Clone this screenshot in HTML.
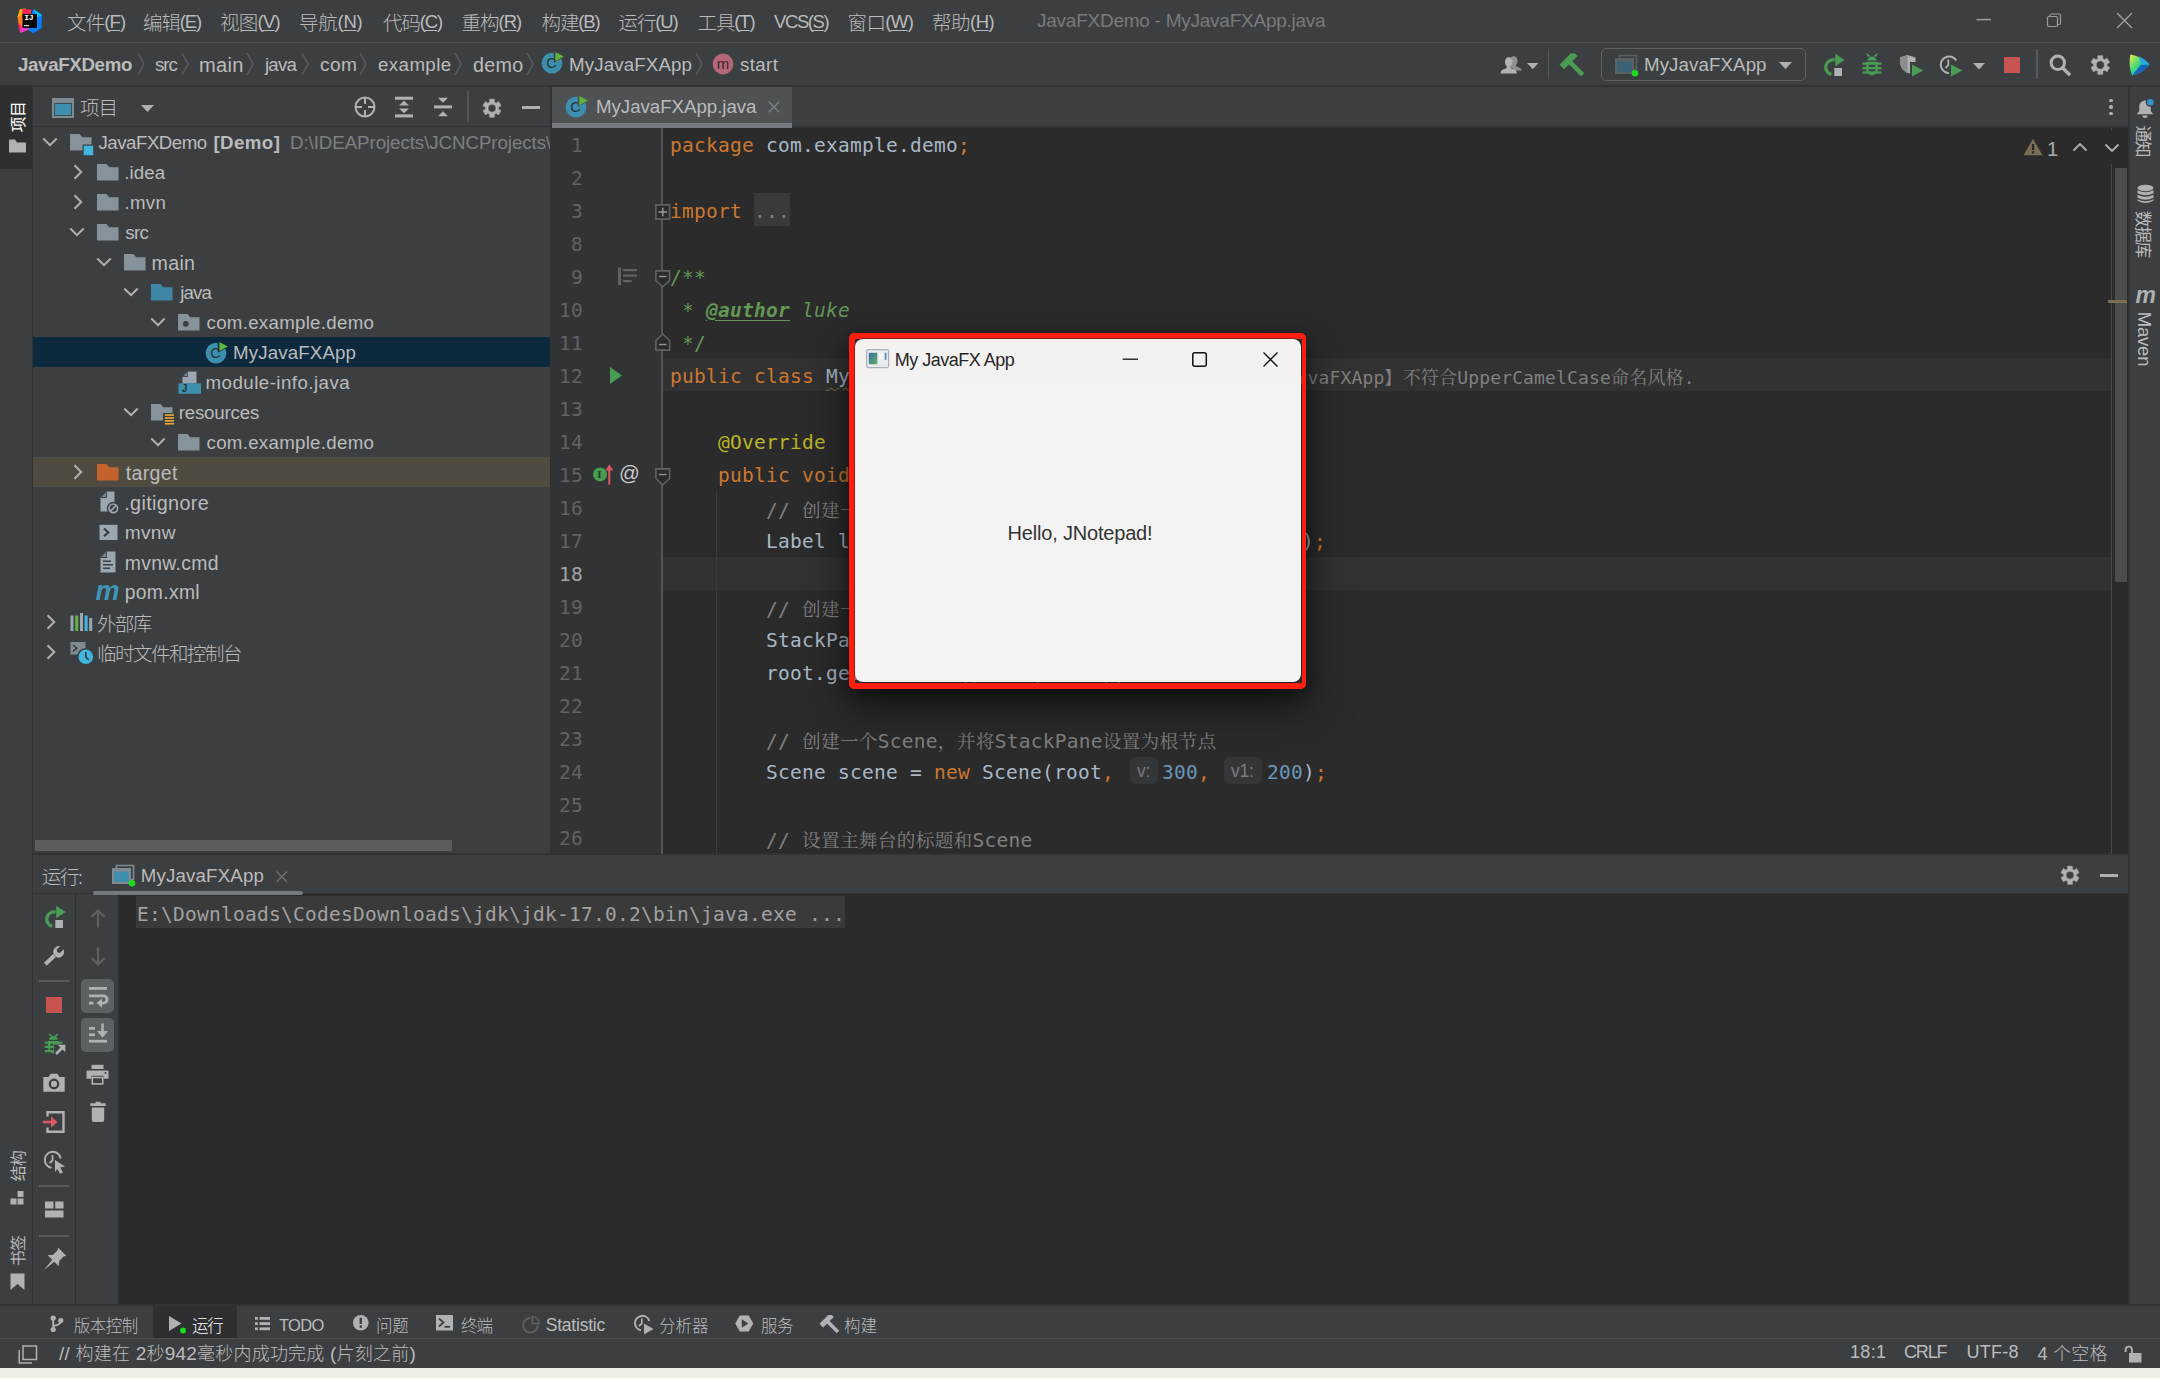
<!DOCTYPE html><html lang="zh-CN"><head><meta charset="utf-8"><title>JavaFXDemo - MyJavaFXApp.java</title><style>
*{box-sizing:border-box;margin:0;padding:0}
html,body{width:2160px;height:1378px;overflow:hidden;background:#3c3f41}
body{position:relative;font-family:"Liberation Sans","Noto Sans CJK SC",sans-serif;font-size:19px;color:#bbbbbb}
.a{position:absolute}
.t{position:absolute;white-space:pre;height:30px;line-height:30px}
.c{font-family:"Noto Sans CJK SC","Liberation Sans",sans-serif;font-size:19.5px;font-weight:300}
.m{font-family:"Liberation Mono","Noto Sans CJK SC",monospace;font-size:20px}
.code{position:absolute;white-space:pre;height:33px;line-height:33px;font-family:"DejaVu Sans Mono","Liberation Mono","Noto Serif CJK SC",monospace;font-size:19.500px;letter-spacing:0.260px;color:#a9b7c6;left:670px}
.ln{position:absolute;white-space:pre;height:33px;line-height:33px;font-family:"DejaVu Sans Mono","Liberation Mono",monospace;font-size:19.500px;letter-spacing:0.260px;color:#606366;text-align:right;width:40px;left:543px}
.z{font-family:"Noto Serif CJK SC",serif;font-size:18.700px}.z2{font-family:"Noto Serif CJK SC",serif;font-size:18px}.dc0{color:#629755}.zs{font-family:"Noto Sans CJK SC",sans-serif!important}
.ml{position:relative;top:-2px}
.k{color:#cc7832}.cm{color:#808080}.dc{color:#629755;font-style:italic}.an{color:#bbb529}.nu{color:#6897bb}
svg{position:absolute;overflow:visible}
u{text-decoration:underline;text-underline-offset:2px}
</style></head><body><div class="a" style="left:0px;top:0px;width:2160px;height:1378px;background:#3c3f41;"></div><div class="a" style="left:0px;top:42px;width:2160px;height:1px;background:#515151;"></div><div class="a" style="left:0px;top:85px;width:2160px;height:2px;background:#323232;"></div><div class="a" style="left:552px;top:87px;width:1576px;height:40px;background:#3c3f41;"></div><div class="a" style="left:552px;top:126px;width:1576px;height:2px;background:#323232;"></div><div class="a" style="left:552px;top:128px;width:1576px;height:726px;background:#2b2b2b;"></div><div class="a" style="left:552px;top:128px;width:110px;height:726px;background:#313335;"></div><div class="a" style="left:550px;top:87px;width:2px;height:768px;background:#323232;"></div><div class="a" style="left:32px;top:87px;width:1px;height:1219px;background:#323232;"></div><div class="a" style="left:33px;top:853px;width:2095px;height:2px;background:#323232;"></div><div class="a" style="left:33px;top:855px;width:2095px;height:38px;background:#3c3f41;"></div><div class="a" style="left:33px;top:893px;width:2095px;height:1px;background:#323232;"></div><div class="a" style="left:119px;top:894px;width:2009px;height:410px;background:#2b2b2b;"></div><div class="a" style="left:75px;top:894px;width:1px;height:410px;background:#323232;"></div><div class="a" style="left:118px;top:894px;width:1px;height:410px;background:#323232;"></div><div class="a" style="left:2128px;top:87px;width:1.5px;height:1219px;background:#313335;"></div><div class="a" style="left:0px;top:1304px;width:2160px;height:2px;background:#323232;"></div><div class="a" style="left:0px;top:1338px;width:2160px;height:1px;background:#4a4d4f;"></div><div class="a" style="left:0px;top:1368px;width:2160px;height:10px;background:#eeeee3;"></div><svg style="left:17px;top:8px" width="26" height="26" viewBox="0 0 26 26">
<polygon points="0.500,9 3,1.500 8.500,0.300 7,11 7.500,18 1.500,14.500" fill="#fc801d"/>
<polygon points="0.500,9 3,1.500 6,0.800 4,8" fill="#fdb60d"/>
<polygon points="5.500,1 14.500,1.800 13,9 5,10" fill="#fe2857"/>
<polygon points="1,15 7,12 9,20 3,25" fill="#fe2857"/>
<polygon points="1,14.500 6,12.500 5,18" fill="#fc801d"/>
<polygon points="14,7 16.500,1 25,7 24.500,20 16,25.500 10,21" fill="#087cfa"/>
<polygon points="16.500,1 25,7 20,10" fill="#07c3f2"/>
<polygon points="3,25 4,18 13,20.500 9,23" fill="#f23ac5"/>
<rect x="5.5" y="6" width="14.5" height="14" fill="#0a0a0a"/>
<rect x="7" y="17.2" width="5" height="1" fill="#fff"/>
</svg><div class="t " style="left:24.3px;top:13.3px;height:10px;line-height:10px;font-family:'Liberation Mono',monospace;font-weight:bold;font-size:8px;color:#fff;letter-spacing:-0.3px">IJ</div><div class="t " style="left:67.00px;top:6.5px;height:30px;line-height:30px;font-size:18.5px;letter-spacing:-0.875px"><span class="c">文件</span><span class="ml">(<u>F</u>)</span></div><div class="t " style="left:143.00px;top:6.5px;height:30px;line-height:30px;font-size:18.5px;letter-spacing:-1.125px"><span class="c">编辑</span><span class="ml">(<u>E</u>)</span></div><div class="t " style="left:220.00px;top:6.5px;height:30px;line-height:30px;font-size:18.5px;letter-spacing:-0.750px"><span class="c">视图</span><span class="ml">(<u>V</u>)</span></div><div class="t " style="left:299.00px;top:6.5px;height:30px;line-height:30px;font-size:18.5px;letter-spacing:-0.250px"><span class="c">导航</span><span class="ml">(<u>N</u>)</span></div><div class="t " style="left:383.00px;top:6.5px;height:30px;line-height:30px;font-size:18.5px;letter-spacing:-1.125px"><span class="c">代码</span><span class="ml">(<u>C</u>)</span></div><div class="t " style="left:461.50px;top:6.5px;height:30px;line-height:30px;font-size:18.5px;letter-spacing:-1.000px"><span class="c">重构</span><span class="ml">(<u>R</u>)</span></div><div class="t " style="left:541.50px;top:6.5px;height:30px;line-height:30px;font-size:18.5px;letter-spacing:-1.125px"><span class="c">构建</span><span class="ml">(<u>B</u>)</span></div><div class="t " style="left:618.50px;top:6.5px;height:30px;line-height:30px;font-size:18.5px;letter-spacing:-1.125px"><span class="c">运行</span><span class="ml">(<u>U</u>)</span></div><div class="t " style="left:697.50px;top:6.5px;height:30px;line-height:30px;font-size:18.5px;letter-spacing:-1.125px"><span class="c">工具</span><span class="ml">(<u>T</u>)</span></div><div class="t " style="left:774.00px;top:7.199999999999999px;height:30px;line-height:30px;font-size:18.5px;letter-spacing:-1.400px">VCS(<u>S</u>)</div><div class="t " style="left:847.50px;top:6.5px;height:30px;line-height:30px;font-size:18.5px;letter-spacing:-0.625px"><span class="c">窗口</span><span class="ml">(<u>W</u>)</span></div><div class="t " style="left:932.00px;top:6.5px;height:30px;line-height:30px;font-size:18.5px;letter-spacing:-0.500px"><span class="c">帮助</span><span class="ml">(<u>H</u>)</span></div><div class="t " style="left:1037.00px;top:5.5px;height:30px;line-height:30px;color:#787a7c;font-size:19px;letter-spacing:-0.250px">JavaFXDemo - MyJavaFXApp.java</div><svg style="left:1970px;top:8px" width="170" height="26" viewBox="0 0 170 26" fill="none" stroke="#9a9c9e" stroke-width="1.2"><path d="M6.500 11.600H21" stroke-width="1.500"/><rect x="77.5" y="8.5" width="10" height="10" rx="1.5"/><path d="M80 8.5V7.5q0-1.5 1.5-1.5H89q1.5 0 1.5 1.5V15q0 1.5-1.5 1.5H87.5"/><path d="M147 5L162 20M162 5L147 20" stroke="#a0a2a4" stroke-width="1.3"/></svg><div class="t " style="left:18.00px;top:50.0px;height:30px;line-height:30px;font-size:18.700px;font-weight:bold;font-size:18.700px;letter-spacing:-0.333px">JavaFXDemo</div><div class="t " style="left:155.00px;top:50.0px;height:30px;line-height:30px;font-size:18.700px;;letter-spacing:-1.000px">src</div><div class="t " style="left:198.92px;top:50.0px;height:30px;line-height:30px;font-size:20.11px;;letter-spacing:0.350px">main</div><div class="t " style="left:265.00px;top:50.0px;height:30px;line-height:30px;font-size:18.700px;;letter-spacing:-0.833px">java</div><div class="t " style="left:320.00px;top:50.0px;height:30px;line-height:30px;font-size:19.13px;;letter-spacing:0.350px">com</div><div class="t " style="left:378.00px;top:50.0px;height:30px;line-height:30px;font-size:18.700px;;letter-spacing:0.417px">example</div><div class="t " style="left:473.00px;top:50.0px;height:30px;line-height:30px;font-size:19.70px;;letter-spacing:0.350px">demo</div><div class="t " style="left:569.00px;top:50.0px;height:30px;line-height:30px;font-size:18.700px;;letter-spacing:0.150px">MyJavaFXApp</div><div class="t " style="left:740.00px;top:50.0px;height:30px;line-height:30px;font-size:18.700px;;letter-spacing:0.375px">start</div><svg style="left:137px;top:52px" width="9" height="24" viewBox="0 0 9 24" fill="none" stroke="#5d6062" stroke-width="1.2"><path d="M1 1L7 12L1 23"/></svg><svg style="left:181px;top:52px" width="9" height="24" viewBox="0 0 9 24" fill="none" stroke="#5d6062" stroke-width="1.2"><path d="M1 1L7 12L1 23"/></svg><svg style="left:246px;top:52px" width="9" height="24" viewBox="0 0 9 24" fill="none" stroke="#5d6062" stroke-width="1.2"><path d="M1 1L7 12L1 23"/></svg><svg style="left:301px;top:52px" width="9" height="24" viewBox="0 0 9 24" fill="none" stroke="#5d6062" stroke-width="1.2"><path d="M1 1L7 12L1 23"/></svg><svg style="left:359px;top:52px" width="9" height="24" viewBox="0 0 9 24" fill="none" stroke="#5d6062" stroke-width="1.2"><path d="M1 1L7 12L1 23"/></svg><svg style="left:454px;top:52px" width="9" height="24" viewBox="0 0 9 24" fill="none" stroke="#5d6062" stroke-width="1.2"><path d="M1 1L7 12L1 23"/></svg><svg style="left:526px;top:52px" width="9" height="24" viewBox="0 0 9 24" fill="none" stroke="#5d6062" stroke-width="1.2"><path d="M1 1L7 12L1 23"/></svg><svg style="left:695px;top:52px" width="9" height="24" viewBox="0 0 9 24" fill="none" stroke="#5d6062" stroke-width="1.2"><path d="M1 1L7 12L1 23"/></svg><svg style="left:541px;top:51px" width="24" height="24" viewBox="0 0 24 24"><circle cx="11" cy="12.2" r="10.4" fill="#3d8fad"/><text x="10.6" y="17" text-anchor="middle" font-family="Liberation Sans,sans-serif" font-size="14.5" fill="#26343c">C</text><path d="M12.8 -0.6L24.4 5.6L12.8 11.8Z" fill="#3c3f41"/><path d="M14.4 0.9L22.8 5.6L14.4 10.3Z" fill="#5fb63c"/></svg><svg style="left:712px;top:52.5px" width="22" height="22" viewBox="0 0 22 22"><circle cx="11" cy="11" r="10.4" fill="#b5677a"/><text x="11" y="15.5" text-anchor="middle" font-family="Liberation Sans,sans-serif" font-size="15" fill="#3a2329">m</text></svg><svg style="left:1500px;top:54px" width="24" height="22" viewBox="0 0 24 22" ><path d="M13.5 2.2c2.6 0 4 2 4 4.6 0 1.8-.7 3.3-1.8 4.300 .3 1.300 1.500 1.800 3.500 2.600 1.600.6 2.300 1.300 2.500 2.900H13.500c-.3-1.900-1.500-2.900-3.200-3.500 1.100-1.300 1.400-2.400 1.400-4.200 0-2-.5-3.500-1.600-4.600.8-1.300 1.900-2.100 3.400-2.100Z" fill="#8f9193"/><path d="M8.200 3.200c2.800 0 4.300 2.100 4.300 4.900 0 2-.8 3.600-2 4.600.2 1.500 1.500 2 3.600 2.800 1.800.7 2.700 1.500 2.900 4.100H.5c.2-2.600 1.100-3.400 2.900-4.100 2.100-.8 3.400-1.300 3.600-2.800-1.200-1-2-2.600-2-4.600 0-2.800 1.500-4.900 3.200-4.900Z" fill="#afb1b3"/></svg><svg style="left:1527.25px;top:62.85px" width="11.5" height="6.3" viewBox="0 0 11.5 6.3" ><path d="M0 0H11.5L5.75 6.3Z" fill="#afb1b3"/></svg><div class="a" style="left:1547.5px;top:49px;width:1.5px;height:30px;background:#555759;"></div><svg style="left:0;top:0" width="1" height="1"><g transform="translate(1568.3 60.5) rotate(-45) scale(1.0)" fill="#499c54"><path d="M-9.200 -3.300H6.500L9.600 -0.300V3.300H-9.200Z"/><rect x="-2.200" y="2" width="4.500" height="18.300"/></g></svg><div class="a" style="left:1601px;top:48px;width:205px;height:33px;border:1.5px solid #5e6062;border-radius:5px"></div><svg style="left:1615px;top:54px" width="24" height="24" viewBox="0 0 24 24" ><path d="M4.500 4.500V1.500H21.500V15.500H19" fill="none" stroke="#5a6165" stroke-width="1.600"/><rect x="1.100" y="5.100" width="16.800" height="13.800" fill="#3b6174" stroke="#5a6165" stroke-width="2.200"/><rect x="0" y="4" width="19" height="3.600" fill="#5a6165"/><circle cx="20" cy="19.200" r="3.300" fill="#1ddc1d"/></svg><div class="t " style="left:1644.00px;top:49.5px;height:30px;line-height:30px;font-size:18.700px;letter-spacing:0.100px">MyJavaFXApp</div><svg style="left:1778.5px;top:61.5px" width="13" height="7" viewBox="0 0 13 7" ><path d="M0 0H13L6.5 7Z" fill="#afb1b3"/></svg><svg style="left:1822px;top:53px" width="24" height="24" viewBox="0 0 24 24" ><path d="M12.600 7.050A7.300 7.300 0 1 0 9.400 21.300" fill="none" stroke="#499c54" stroke-width="3.200"/><path d="M13.200 0.800L22.600 7L13.200 13.200Z" fill="#499c54"/><rect x="12.300" y="15" width="7.700" height="8" fill="#afb1b3"/></svg><svg style="left:1862px;top:54px" width="20" height="22" viewBox="0 0 20 22" ><g fill="#499c54"><path d="M4.200 0.500l2.700 2.700 1.200-1.200L5.400 -0.700ZM15.800 0.500l-2.700 2.700-1.200-1.200L14.600 -0.700Z"/><path d="M5.500 6.500a4.500 4 0 0 1 9 0Z"/><path d="M4.200 7.800H15.800V15.500a5.800 5.800 0 0 1-11.600 0Z"/><rect x="0.500" y="8.500" width="19" height="2.300"/><rect x="0.500" y="13" width="19" height="2.300"/><rect x="0.500" y="17.300" width="19" height="2.300"/></g><rect x="6.800" y="10.800" width="6.400" height="2.200" fill="#3c3f41"/><rect x="6.800" y="15.300" width="6.400" height="2" fill="#3c3f41"/></svg><svg style="left:1899px;top:54px" width="26" height="24" viewBox="0 0 26 24" ><path d="M1 3.500L8.500 1L16.500 3.500V8H11V19.500C5 17.500 1 13 1 8Z" fill="#afb1b3"/><path d="M8.600 1L1 3.500V8C1 13 4.500 17.500 8.600 19.600Z" fill="#8b8d8f"/><path d="M13 10.500L24.300 16.500L13 22.500Z" fill="#499c54"/></svg><svg style="left:1938px;top:54px" width="26" height="24" viewBox="0 0 26 24" ><path d="M18.300 6.500A8.300 8.300 0 1 0 11 19" fill="none" stroke="#afb1b3" stroke-width="2"/><path d="M10.300 5.500V11.200L7.500 14" fill="none" stroke="#afb1b3" stroke-width="1.800"/><path d="M13 10.500L24.300 16.500L13 22.500Z" fill="#499c54"/></svg><svg style="left:1973.0px;top:62.55px" width="12" height="6.5" viewBox="0 0 12 6.5" ><path d="M0 0H12L6.0 6.5Z" fill="#afb1b3"/></svg><div class="a" style="left:2004.3px;top:57.3px;width:15.5px;height:15.4px;background:#c75450;"></div><div class="a" style="left:2036px;top:49px;width:2px;height:30px;background:#555759;"></div><svg style="left:2046px;top:52px" width="28" height="28" viewBox="0 0 28 28" ><circle cx="11.800" cy="10.800" r="6.700" fill="none" stroke="#afb1b3" stroke-width="3"/><path d="M16.500 15.800L24 23.200" stroke="#afb1b3" stroke-width="3.400"/></svg><svg style="left:2088px;top:52px" width="26" height="26" viewBox="0 0 26 26" ><path d="M14.68 6.71L14.81 3.73L9.79 3.73L9.92 6.71L8.04 7.80L5.53 6.19L3.02 10.54L5.67 11.91L5.67 14.09L3.02 15.46L5.53 19.81L8.04 18.20L9.92 19.29L9.79 22.27L14.81 22.27L14.68 19.29L16.56 18.20L19.07 19.81L21.58 15.46L18.93 14.09L18.93 11.91L21.58 10.54L19.07 6.19L16.56 7.80ZM16.43 13.00A4.13 4.13 0 1 0 8.17 13.00A4.13 4.13 0 1 0 16.43 13.00Z" fill="#afb1b3" fill-rule="evenodd" stroke="#afb1b3" stroke-width="0.6" stroke-linejoin="round"/></svg><svg style="left:2127px;top:53px" width="24" height="24" viewBox="0 0 24 24" ><defs><linearGradient id="lg1" x1="0" y1="0" x2="1" y2="1"><stop offset="0" stop-color="#f4f14a"/><stop offset="0.450" stop-color="#3fd67a"/><stop offset="1" stop-color="#12b5c9"/></linearGradient></defs><path d="M3.500 1.500Q1 11 5 22.500Q16 20 22.500 11.500Q14 3 3.500 1.500Z" fill="url(#lg1)"/><path d="M14 11.500L22.500 11.500Q16 20 5 22.500Z" fill="#1565c0"/><path d="M14 11.500L22.500 11.500Q18 6 12 3.500Z" fill="#29a9e0"/></svg><div class="a" style="left:0px;top:87px;width:32px;height:82px;background:#2d2f30;"></div><div class="a c" style="left:18px;top:116.5px;width:0;height:0;"><div style="position:absolute;white-space:pre;transform:translate(-50%,-50%) rotate(-90deg);line-height:20px;font-size:15.800px;color:#ffffff;letter-spacing:-0.500px;font-weight:400">项目</div></div><svg style="left:8px;top:138px" width="20" height="16" viewBox="0 0 20 16" ><path d="M1 2.500Q1 1.500 2 1.500H7L9 4.500H17Q18 4.500 18 5.500V14.500H1Z" fill="#afb1b3"/></svg><div class="a c" style="left:17.8px;top:1166px;width:0;height:0;"><div style="position:absolute;white-space:pre;transform:translate(-50%,-50%) rotate(-90deg);line-height:20px;font-size:15.800px;letter-spacing:-0.500px;font-weight:400">结构</div></div><svg style="left:10px;top:1190px" width="16" height="16" viewBox="0 0 16 16" ><rect x="7.500" y="1" width="6" height="6" fill="#afb1b3"/><rect x="0.500" y="8.500" width="6" height="6" fill="#afb1b3"/><rect x="7.500" y="8.500" width="6" height="6" fill="#afb1b3"/></svg><div class="a c" style="left:17.8px;top:1250.5px;width:0;height:0;"><div style="position:absolute;white-space:pre;transform:translate(-50%,-50%) rotate(-90deg);line-height:20px;font-size:15.800px;letter-spacing:-0.500px;font-weight:400">书签</div></div><svg style="left:10px;top:1273px" width="16" height="18" viewBox="0 0 16 18" ><path d="M0.500 0.500H14.500V17L7.500 11L0.500 17Z" fill="#afb1b3"/></svg><svg style="left:52px;top:98px" width="22" height="20" viewBox="0 0 22 20" ><rect x="0" y="0" width="22" height="20" fill="#7f8b91"/><rect x="2.500" y="5.500" width="17" height="12" fill="#3d8fad"/><rect x="2.500" y="5.500" width="17" height="12" fill="none" stroke="#3c4a52" stroke-width="1"/></svg><div class="t c" style="left:80.00px;top:92.0px;height:30px;line-height:30px;font-size:19.500px;letter-spacing:-1.000px">项目</div><svg style="left:140.5px;top:105.0px" width="13" height="7" viewBox="0 0 13 7" ><path d="M0 0H13L6.5 7Z" fill="#afb1b3"/></svg><svg style="left:353px;top:95px" width="24" height="24" viewBox="0 0 24 24" ><circle cx="12" cy="12" r="9.500" fill="none" stroke="#afb1b3" stroke-width="2"/><path d="M12 2.500V9M12 15V21.500M2.500 12H9M15 12H21.500" stroke="#afb1b3" stroke-width="2"/></svg><svg style="left:394px;top:96px" width="20" height="22" viewBox="0 0 20 22" ><rect x="1" y="0.700" width="18" height="3" fill="#afb1b3"/><rect x="1" y="18.400" width="18" height="3" fill="#afb1b3"/><path d="M5 9.600L10 4.800L15 9.600ZM5 12.500L10 17.300L15 12.500Z" fill="#afb1b3"/></svg><svg style="left:433px;top:96px" width="20" height="22" viewBox="0 0 20 22" ><rect x="1" y="9.400" width="18" height="3" fill="#afb1b3"/><path d="M5 1.800L10 6.800L15 1.800ZM5 20.200L10 15.200L15 20.200Z" fill="#afb1b3"/></svg><div class="a" style="left:467px;top:91px;width:2px;height:31px;background:#515355;"></div><svg style="left:480px;top:96px" width="24" height="24" viewBox="0 0 24 24" ><path d="M14.30 6.11L14.44 3.22L9.56 3.22L9.70 6.11L7.88 7.16L5.44 5.60L3.01 9.82L5.58 11.15L5.58 13.25L3.01 14.58L5.44 18.80L7.88 17.24L9.70 18.29L9.56 21.18L14.44 21.18L14.30 18.29L16.12 17.24L18.56 18.80L20.99 14.58L18.42 13.25L18.42 11.15L20.99 9.82L18.56 5.60L16.12 7.16ZM16.00 12.20A4.00 4.00 0 1 0 8.00 12.20A4.00 4.00 0 1 0 16.00 12.20Z" fill="#afb1b3" fill-rule="evenodd" stroke="#afb1b3" stroke-width="0.6" stroke-linejoin="round"/></svg><div class="a" style="left:522px;top:105.6px;width:18px;height:3px;background:#afb1b3;"></div><div class="a" style="left:33px;top:126px;width:517px;height:1px;background:#323232;"></div><div class="a" style="left:33px;top:337px;width:517px;height:30px;background:#0d293e;"></div><div class="a" style="left:33px;top:457px;width:517px;height:30px;background:#4f4b41;"></div><svg style="left:42px;top:136.5px" width="16" height="10" viewBox="0 0 16 10" ><path d="M1.300 1.500L8 8.200L14.700 1.500" fill="none" stroke="#afb1b3" stroke-width="2"/></svg><svg style="left:70px;top:133.8px" width="24" height="22" viewBox="0 0 24 22" ><path d="M0 0H9.600L12.200 3.300H21.500V16.500H0Z" fill="#87939a"/><rect x="12.500" y="10.500" width="12" height="12" fill="#3c3f41"/><rect x="13.700" y="11.700" width="9.500" height="9.500" fill="#40b6e0"/></svg><div class="t " style="left:98.50px;top:128.0px;height:30px;line-height:30px;font-size:18.700px;letter-spacing:-0.500px">JavaFXDemo</div><div class="t " style="left:213.50px;top:128.0px;height:30px;line-height:30px;font-size:18.700px;font-weight:bold;letter-spacing:0.400px">[Demo]</div><div class="t " style="left:290.00px;top:128.0px;height:30px;line-height:30px;font-size:18.700px;color:#7d8082;letter-spacing:-0.056px">D:\IDEAProjects\JCNCProjects</div><div class="t " style="left:545.8px;top:128.0px;height:30px;line-height:30px;font-size:18.700px;color:#7d8082;width:4.200px;overflow:hidden">\</div><svg style="left:72.5px;top:164px" width="10" height="16" viewBox="0 0 10 16" ><path d="M1.500 1.300L8.200 8L1.500 14.700" fill="none" stroke="#afb1b3" stroke-width="2"/></svg><svg style="left:97px;top:163.8px" width="22" height="17" viewBox="0 0 22 17" ><path d="M0 0H9.600L12.200 3.300H21.500V16.500H0Z" fill="#87939a"/></svg><div class="t " style="left:124.30px;top:158.0px;height:30px;line-height:30px;font-size:18.700px;letter-spacing:0.050px">.idea</div><svg style="left:72.5px;top:194px" width="10" height="16" viewBox="0 0 10 16" ><path d="M1.500 1.300L8.200 8L1.500 14.700" fill="none" stroke="#afb1b3" stroke-width="2"/></svg><svg style="left:97px;top:193.8px" width="22" height="17" viewBox="0 0 22 17" ><path d="M0 0H9.600L12.200 3.300H21.500V16.500H0Z" fill="#87939a"/></svg><div class="t " style="left:124.30px;top:188.0px;height:30px;line-height:30px;font-size:18.700px;letter-spacing:0.400px">.mvn</div><svg style="left:69px;top:226.5px" width="16" height="10" viewBox="0 0 16 10" ><path d="M1.300 1.500L8 8.200L14.700 1.500" fill="none" stroke="#afb1b3" stroke-width="2"/></svg><svg style="left:97px;top:223.8px" width="22" height="17" viewBox="0 0 22 17" ><path d="M0 0H9.600L12.200 3.300H21.500V16.500H0Z" fill="#87939a"/></svg><div class="t " style="left:125.30px;top:218.0px;height:30px;line-height:30px;font-size:18.700px;letter-spacing:-0.650px">src</div><svg style="left:96px;top:256.5px" width="16" height="10" viewBox="0 0 16 10" ><path d="M1.300 1.500L8 8.200L14.700 1.500" fill="none" stroke="#afb1b3" stroke-width="2"/></svg><svg style="left:124px;top:253.8px" width="22" height="17" viewBox="0 0 22 17" ><path d="M0 0H9.600L12.200 3.300H21.500V16.500H0Z" fill="#87939a"/></svg><div class="t " style="left:151.45px;top:248.0px;height:30px;line-height:30px;font-size:19.64px;letter-spacing:0.350px">main</div><svg style="left:123px;top:286.5px" width="16" height="10" viewBox="0 0 16 10" ><path d="M1.300 1.500L8 8.200L14.700 1.500" fill="none" stroke="#afb1b3" stroke-width="2"/></svg><svg style="left:151px;top:283.8px" width="22" height="17" viewBox="0 0 22 17" ><path d="M0 0H9.600L12.200 3.300H21.500V16.500H0Z" fill="#3f88a5"/></svg><div class="t " style="left:180.20px;top:278.0px;height:30px;line-height:30px;font-size:18.700px;letter-spacing:-0.900px">java</div><svg style="left:150px;top:316.5px" width="16" height="10" viewBox="0 0 16 10" ><path d="M1.300 1.500L8 8.200L14.700 1.500" fill="none" stroke="#afb1b3" stroke-width="2"/></svg><svg style="left:178px;top:313.8px" width="22" height="17" viewBox="0 0 22 17" ><path d="M0 0H9.600L12.200 3.300H21.500V16.500H0Z" fill="#87939a"/><circle cx="7.800" cy="9.800" r="2.900" fill="#3c3f41"/></svg><div class="t " style="left:206.50px;top:308.0px;height:30px;line-height:30px;font-size:18.700px;letter-spacing:0.287px">com.example.demo</div><svg style="left:204.5px;top:340.5px" width="24" height="24" viewBox="0 0 24 24"><circle cx="11" cy="12.2" r="10.4" fill="#3d8fad"/><text x="10.6" y="17" text-anchor="middle" font-family="Liberation Sans,sans-serif" font-size="14.5" fill="#26343c">C</text><path d="M12.8 -0.6L24.4 5.6L12.8 11.8Z" fill="#0d293e"/><path d="M14.4 0.9L22.8 5.6L14.4 10.3Z" fill="#5fb63c"/></svg><div class="t " style="left:233.00px;top:338.0px;height:30px;line-height:30px;font-size:18.700px;letter-spacing:0.150px">MyJavaFXApp</div><svg style="left:178px;top:371px" width="24" height="24" viewBox="0 0 24 24" ><path d="M4.500 5.700L9.700 0.500H18.500V12.500H4.500Z" fill="#9aa7b0"/><path d="M4.200 6L9.900 0.300V6Z" fill="#3c3f41"/><path d="M5.600 5.200L9.200 1.600V5.200Z" fill="#9aa7b0" opacity="0.700"/><rect x="0.500" y="12.300" width="22.500" height="10.500" fill="#3d8fad"/><text x="6.500" y="21.300" text-anchor="middle" font-family="Liberation Sans,sans-serif" font-size="10" font-weight="bold" fill="#22333c">J</text></svg><div class="t " style="left:205.60px;top:368.0px;height:30px;line-height:30px;font-size:18.700px;letter-spacing:0.460px">module-info.java</div><svg style="left:123px;top:406.5px" width="16" height="10" viewBox="0 0 16 10" ><path d="M1.300 1.500L8 8.200L14.700 1.500" fill="none" stroke="#afb1b3" stroke-width="2"/></svg><svg style="left:151px;top:403.8px" width="24" height="22" viewBox="0 0 24 22" ><path d="M0 0H9.600L12.200 3.300H21.500V16.500H0Z" fill="#87939a"/><rect x="12" y="9" width="12" height="13" fill="#3c3f41"/><rect x="13.800" y="10.2" width="9.200" height="1.700" fill="#e2a53a"/><rect x="13.800" y="13.1" width="9.200" height="1.700" fill="#e2a53a"/><rect x="13.800" y="16.0" width="9.200" height="1.700" fill="#e2a53a"/><rect x="13.800" y="18.9" width="9.200" height="1.700" fill="#e2a53a"/></svg><div class="t " style="left:178.70px;top:398.0px;height:30px;line-height:30px;font-size:18.700px;letter-spacing:-0.175px">resources</div><svg style="left:150px;top:436.5px" width="16" height="10" viewBox="0 0 16 10" ><path d="M1.300 1.500L8 8.200L14.700 1.500" fill="none" stroke="#afb1b3" stroke-width="2"/></svg><svg style="left:178px;top:433.8px" width="22" height="17" viewBox="0 0 22 17" ><path d="M0 0H9.600L12.200 3.300H21.500V16.500H0Z" fill="#87939a"/></svg><div class="t " style="left:206.50px;top:428.0px;height:30px;line-height:30px;font-size:18.700px;letter-spacing:0.287px">com.example.demo</div><svg style="left:72.5px;top:464px" width="10" height="16" viewBox="0 0 10 16" ><path d="M1.500 1.300L8.200 8L1.500 14.700" fill="none" stroke="#afb1b3" stroke-width="2"/></svg><svg style="left:97px;top:463.8px" width="22" height="17" viewBox="0 0 22 17" ><path d="M0 0H9.600L12.200 3.300H21.500V16.500H0Z" fill="#c4622d"/></svg><div class="t " style="left:125.70px;top:458.0px;height:30px;line-height:30px;font-size:19.54px;letter-spacing:0.350px">target</div><svg style="left:97px;top:491px" width="24" height="24" viewBox="0 0 24 24" ><path d="M3.500 6.700L9.700 0.500H17.500V20.500H3.500Z" fill="#9aa7b0"/><path d="M3.200 7L9.900 0.300V7Z" fill="#3c3f41"/><path d="M4.600 6L9 1.600V6Z" fill="#9aa7b0" opacity="0.700"/><circle cx="16.300" cy="17.300" r="6.500" fill="#3c3f41"/><circle cx="16.300" cy="17.300" r="4.300" fill="none" stroke="#9aa7b0" stroke-width="1.700"/><path d="M13.200 20.400L19.400 14.200" stroke="#9aa7b0" stroke-width="1.700"/></svg><div class="t " style="left:124.24px;top:488.0px;height:30px;line-height:30px;font-size:19.75px;letter-spacing:0.350px">.gitignore</div><svg style="left:97px;top:521px" width="24" height="24" viewBox="0 0 24 24" ><rect x="2.500" y="3.800" width="18" height="15.200" fill="#9aa7b0"/><path d="M7 7.500L11.300 11.400L7 15.300" fill="none" stroke="#3c3f41" stroke-width="2.200"/></svg><div class="t " style="left:124.68px;top:518.0px;height:30px;line-height:30px;font-size:19.11px;letter-spacing:0.350px">mvnw</div><svg style="left:97px;top:551px" width="24" height="24" viewBox="0 0 24 24" ><path d="M3.500 6.700L9.700 0.500H18.500V21.500H3.500Z" fill="#9aa7b0"/><path d="M3.200 7L9.900 0.300V7Z" fill="#3c3f41"/><path d="M4.600 6L9 1.600V6Z" fill="#9aa7b0" opacity="0.700"/><path d="M6 10.300H14M6 13.800H16M6 17.300H13" stroke="#3c3f41" stroke-width="1.600"/></svg><div class="t " style="left:124.66px;top:548.0px;height:30px;line-height:30px;font-size:19.38px;letter-spacing:0.350px">mvnw.cmd</div><div class="t" style="left:95.5px;top:575.5px;font-weight:bold;font-style:italic;font-size:27px;color:#3f95b5;letter-spacing:-1px;font-family:'Liberation Sans',sans-serif">m</div><div class="t " style="left:124.67px;top:578.0px;height:30px;line-height:30px;font-size:19.30px;letter-spacing:0.350px">pom.xml</div><svg style="left:45.5px;top:614px" width="10" height="16" viewBox="0 0 10 16" ><path d="M1.500 1.300L8.200 8L1.500 14.700" fill="none" stroke="#afb1b3" stroke-width="2"/></svg><svg style="left:70px;top:611px" width="24" height="24" viewBox="0 0 24 24" ><rect x="0.500" y="4.500" width="3" height="15.500" fill="#9aa7b0"/><rect x="5.200" y="4.500" width="3" height="15.500" fill="#62b543"/><rect x="10" y="2" width="3" height="18" fill="#9aa7b0"/><rect x="14.600" y="4.500" width="3" height="15.500" fill="#40b6e0"/><rect x="19.200" y="7" width="3" height="13" fill="#9aa7b0"/></svg><div class="t c" style="left:97.00px;top:607.5px;height:30px;line-height:30px;font-size:19.500px;letter-spacing:-1.650px">外部库</div><svg style="left:45.5px;top:644px" width="10" height="16" viewBox="0 0 10 16" ><path d="M1.500 1.300L8.200 8L1.500 14.700" fill="none" stroke="#afb1b3" stroke-width="2"/></svg><svg style="left:70px;top:641px" width="24" height="24" viewBox="0 0 24 24" ><rect x="0.500" y="1" width="15" height="12.500" fill="#7f8b91"/><path d="M3 4L6.800 7.200L3 10.400" fill="none" stroke="#3c3f41" stroke-width="1.600"/><circle cx="15.800" cy="15.800" r="8.800" fill="#3c3f41"/><circle cx="15.800" cy="15.800" r="7.300" fill="#40b6e0"/><path d="M15.800 11V16L18.800 19" fill="none" stroke="#3c3f41" stroke-width="1.700"/></svg><div class="t c" style="left:97.00px;top:637.5px;height:30px;line-height:30px;font-size:19.500px;letter-spacing:-1.486px">临时文件和控制台</div><div class="a" style="left:35px;top:840px;width:417px;height:11px;background:#5a5d5f;"></div><div class="a" style="left:552px;top:87px;width:240px;height:41px;background:#4e5254;"></div><div class="a" style="left:552px;top:123px;width:240px;height:5px;background:#747a80;"></div><svg style="left:565px;top:94.5px" width="24" height="24" viewBox="0 0 24 24"><circle cx="11" cy="12.2" r="10.4" fill="#3d8fad"/><text x="10.6" y="17" text-anchor="middle" font-family="Liberation Sans,sans-serif" font-size="14.5" fill="#26343c">C</text><path d="M12.8 -0.6L24.4 5.6L12.8 11.8Z" fill="#4e5254"/><path d="M14.4 0.9L22.8 5.6L14.4 10.3Z" fill="#5fb63c"/></svg><div class="t " style="left:596.00px;top:92.0px;height:30px;line-height:30px;font-size:18.700px;letter-spacing:-0.033px">MyJavaFXApp.java</div><svg style="left:768px;top:101px" width="12" height="12" viewBox="0 0 12 12" ><path d="M0.800 0.800L11.200 11.200M11.200 0.800L0.800 11.200" stroke="#7d8284" stroke-width="1.300"/></svg><div class="a" style="left:2109px;top:98.8px;width:3.600px;height:3.600px;border-radius:50%;background:#afb1b3"></div><div class="a" style="left:2109px;top:105.3px;width:3.600px;height:3.600px;border-radius:50%;background:#afb1b3"></div><div class="a" style="left:2109px;top:111.8px;width:3.600px;height:3.600px;border-radius:50%;background:#afb1b3"></div><div class="a" style="left:662px;top:358px;width:1449px;height:33px;background:#323232;"></div><div class="a" style="left:662px;top:556.5px;width:1449px;height:33px;background:#323232;"></div><div class="a" style="left:661.3px;top:128px;width:1.6px;height:726px;background:#555555;"></div><div class="a" style="left:716px;top:490px;width:1px;height:364px;background:#3b3b3b;"></div><div class="a" style="left:2110.5px;top:128px;width:1px;height:3px;background:#4a4a4a;"></div><div class="a" style="left:2110.5px;top:164px;width:1px;height:690px;background:#4a4a4a;"></div><div class="a" style="left:2115px;top:168px;width:12px;height:414px;background:#4c4c4c;"></div><div class="a" style="left:2108px;top:300px;width:19px;height:3px;background:#7a6f52;"></div><div class="ln" style="top:128.5px;color:#606366">1</div><div class="ln" style="top:161.5px;color:#606366">2</div><div class="ln" style="top:194.5px;color:#606366">3</div><div class="ln" style="top:227.5px;color:#606366">8</div><div class="ln" style="top:260.5px;color:#606366">9</div><div class="ln" style="top:293.5px;color:#606366">10</div><div class="ln" style="top:326.5px;color:#606366">11</div><div class="ln" style="top:359.5px;color:#606366">12</div><div class="ln" style="top:392.5px;color:#606366">13</div><div class="ln" style="top:425.5px;color:#606366">14</div><div class="ln" style="top:458.5px;color:#606366">15</div><div class="ln" style="top:491.5px;color:#606366">16</div><div class="ln" style="top:524.5px;color:#606366">17</div><div class="ln" style="top:557.5px;color:#a4a3a3">18</div><div class="ln" style="top:590.5px;color:#606366">19</div><div class="ln" style="top:623.5px;color:#606366">20</div><div class="ln" style="top:656.5px;color:#606366">21</div><div class="ln" style="top:689.5px;color:#606366">22</div><div class="ln" style="top:722.5px;color:#606366">23</div><div class="ln" style="top:755.5px;color:#606366">24</div><div class="ln" style="top:788.5px;color:#606366">25</div><div class="ln" style="top:821.5px;color:#606366">26</div><div class="code" style="top:128.5px;left:670px"><span class="k">package </span>com.example.demo<span class="k">;</span></div><div class="a" style="left:754px;top:193px;width:36px;height:33px;background:#3a3a3a;"></div><div class="code" style="top:194.5px;left:670px"><span class="k">import </span><span class="cm">...</span></div><div class="code" style="top:260.5px;left:670px"><span class="dc0">/**</span></div><div class="code" style="top:293.5px;left:670px"><span class="dc0"> * </span><span class="dc" style="font-weight:bold;text-decoration:underline;text-underline-offset:3px">@author</span><span class="dc"> luke</span></div><div class="code" style="top:326.5px;left:670px"><span class="dc0"> */</span></div><div class="code" style="top:359.5px;left:670px"><span class="k">public class </span><span style="text-decoration:underline wavy #8a7f55 1px;text-underline-offset:4px">MyJavaFXApp</span><span class="k"> extends </span>Application {</div><div class="code" style="top:359.5px;left:1245.340px;color:#808080;font-size:18px;letter-spacing:0.160px"><span style="position:relative;left:-4px"><span class="z2 zs">【</span>MyJa</span>vaFXApp<span class="z2 zs">】</span><span class="z2">不符合</span>UpperCamelCase<span class="z2">命名风格</span>.</div><div class="code" style="top:425.5px;left:670px">    <span class="an">@Override</span></div><div class="code" style="top:458.5px;left:670px">    <span class="k">public void </span><span style="color:#ffc66d">start</span>(Stage primaryStage) {</div><div class="code" style="top:491.5px;left:670px">        <span class="cm">// <span class="z">创建一个</span>Label<span class="z">节点</span></span></div><div class="code" style="top:524.5px;left:670px">        Label label = <span class="k">new </span>Label(</div><div class="code" style="top:524.5px;left:1086px"><span style="color:#6a8759">"Hello, JNotepad!"</span>)<span class="k">;</span></div><div class="code" style="top:590.5px;left:670px">        <span class="cm">// <span class="z">创建一个</span>StackPane<span class="z">布局</span></span></div><div class="code" style="top:623.5px;left:670px">        StackPane root = <span class="k">new </span>StackPane()<span class="k">;</span></div><div class="code" style="top:656.5px;left:670px">        root.getChildren().add(label)<span class="k">;</span></div><div class="code" style="top:722.5px;left:670px">        <span class="cm">// <span class="z">创建一个</span>Scene<span class="z">，并将</span>StackPane<span class="z">设置为根节点</span></span></div><div class="code" style="top:755.5px;left:670px">        Scene scene = <span class="k">new </span>Scene(root<span class="k">,</span></div><div class="code" style="top:821.5px;left:670px">        <span class="cm">// <span class="z">设置主舞台的标题和</span>Scene</span></div><div class="a" style="left:1129.5px;top:757.0px;width:28px;height:27px;border-radius:6px;background:#343637"></div><div class="t " style="left:1137px;top:756.0px;height:30px;line-height:30px;font-size:17.500px;color:#7a7c7e;letter-spacing:-0.300px">v:</div><div class="a" style="left:1223.7px;top:757.0px;width:38.5px;height:27px;border-radius:6px;background:#343637"></div><div class="t " style="left:1231px;top:756.0px;height:30px;line-height:30px;font-size:17.500px;color:#7a7c7e;letter-spacing:-0.300px">v1:</div><div class="a" style="left:1055px;top:526.0px;width:27px;height:27px;border-radius:6px;background:#343637"></div><div class="t " style="left:1062px;top:525.0px;height:30px;line-height:30px;font-size:17.500px;color:#7a7c7e;letter-spacing:-0.300px">s:</div><div class="code" style="top:755.5px;left:1162px"><span class="nu">300</span><span class="k">,</span></div><div class="code" style="top:755.5px;left:1267px"><span class="nu">200</span>)<span class="k">;</span></div><svg style="left:655px;top:204px" width="16" height="16" viewBox="0 0 16 16" ><rect x="0.900" y="0.900" width="13.700" height="14.200" fill="#2b2b2b" stroke="#606366" stroke-width="1.600"/><path d="M3.500 8H12M7.750 3.700V12.300" stroke="#9c9ea0" stroke-width="1.400"/></svg><svg style="left:655px;top:270px" width="16" height="19" viewBox="0 0 16 19" ><path d="M0.900 0.900H14.600V10.500L7.750 17L0.900 10.500Z" fill="#2b2b2b" stroke="#606366" stroke-width="1.600"/><path d="M4 6.500H11.500" stroke="#909294" stroke-width="1.400"/></svg><svg style="left:655px;top:332.3px" width="16" height="19" viewBox="0 0 16 19" ><path d="M0.900 18.100H14.600V8.500L7.750 2L0.900 8.500Z" fill="#2b2b2b" stroke="#606366" stroke-width="1.600"/><path d="M4 12.500H11.500" stroke="#909294" stroke-width="1.400"/></svg><svg style="left:655px;top:468px" width="16" height="19" viewBox="0 0 16 19" ><path d="M0.900 0.900H14.600V10.500L7.750 17L0.900 10.500Z" fill="#2b2b2b" stroke="#606366" stroke-width="1.600"/><path d="M4 6.500H11.500" stroke="#909294" stroke-width="1.400"/></svg><svg style="left:618px;top:267px" width="20" height="19" viewBox="0 0 20 19" ><rect x="0" y="0.700" width="3" height="17.500" fill="#606366"/><rect x="5" y="2" width="14" height="2.200" fill="#606366"/><rect x="5" y="7.500" width="14" height="2.200" fill="#606366"/><rect x="5" y="13" width="8.700" height="2.200" fill="#606366"/></svg><svg style="left:609px;top:366px" width="14" height="18" viewBox="0 0 14 18" ><path d="M1 1L13 9.500L1 18Z" fill="#499c54"/></svg><svg style="left:592px;top:463px" width="24" height="24" viewBox="0 0 24 24" ><circle cx="8" cy="11.400" r="7" fill="#499c54"/><path d="M17.300 1.500L21.300 7.500H18.300V21.500H16.300V7.500H13.300Z" fill="#db5860"/></svg><div class="t " style="left:597.2px;top:468.4px;height:12px;line-height:12px;font-family:'Liberation Serif',serif;font-weight:bold;font-size:11px;color:#1f3a24">I</div><div class="t " style="left:619px;top:461.0px;height:24px;line-height:24px;font-size:20.500px;color:#c8c8c8">@</div><svg style="left:2023px;top:138px" width="20" height="18" viewBox="0 0 20 18" ><path d="M10 0.800L19.500 17.200H0.500Z" fill="#7a6f54"/><rect x="8.900" y="6" width="2.300" height="6" fill="#2b2b2b"/><rect x="8.900" y="13.200" width="2.300" height="2.300" fill="#2b2b2b"/></svg><div class="t " style="left:2047px;top:133.5px;height:30px;line-height:30px;font-size:20px;color:#a9acae">1</div><svg style="left:2072px;top:142px" width="16" height="10" viewBox="0 0 16 10" ><path d="M1.500 8.500L8 2L14.500 8.500" fill="none" stroke="#afb1b3" stroke-width="1.800"/></svg><svg style="left:2104px;top:143px" width="16" height="10" viewBox="0 0 16 10" ><path d="M1.500 1.500L8 8L14.500 1.500" fill="none" stroke="#afb1b3" stroke-width="1.800"/></svg><div class="a" style="left:848.500px;top:333px;width:457.200px;height:355.500px;border-style:solid;border-color:#ff1e10;border-width:6px 4.700px 6.500px 6px;border-radius:5px;box-shadow:0 18px 42px 4px rgba(0,0,0,0.500),0 6px 12px 0 rgba(0,0,0,0.300)"></div><div class="a" style="left:854.500px;top:339px;width:446.500px;height:343px;border-radius:8px;background:#f3f3f3;box-shadow:0 0 0 1px rgba(30,30,30,0.500)"></div><div class="a" style="left:856px;top:340px;width:444px;height:38px;background:#f4f2f1;border-radius:8px 8px 0 0"></div><svg style="left:866px;top:349px" width="24" height="20" viewBox="0 0 24 20" ><defs><linearGradient id="lg2" x1="0" y1="0" x2="1" y2="1"><stop offset="0" stop-color="#3a6f9e"/><stop offset="1" stop-color="#5fae6e"/></linearGradient></defs><rect x="0.600" y="0.600" width="22" height="18" rx="1.500" fill="#e9eaec" stroke="#a9b1bb" stroke-width="1.200"/><rect x="2.800" y="3.800" width="8.500" height="11.500" fill="url(#lg2)"/><rect x="13" y="3.800" width="4.500" height="7" fill="#f7f7f7"/><rect x="18.700" y="3.800" width="1.800" height="7" fill="#5b8fc0"/></svg><div class="t " style="left:894.80px;top:344.5px;height:30px;line-height:30px;font-size:18px;color:#262626;letter-spacing:-0.500px">My JavaFX App</div><svg style="left:1120px;top:350px" width="162" height="20" viewBox="0 0 162 20" ><path d="M2.700 9.200H18" stroke="#111" stroke-width="1.300"/><rect x="72.800" y="2.800" width="13.500" height="13.500" rx="2" fill="none" stroke="#111" stroke-width="1.500"/><path d="M143.500 2.500L157.500 16.500M157.500 2.500L143.500 16.500" stroke="#111" stroke-width="1.400"/></svg><div class="t " style="left:1007.50px;top:517.5px;height:30px;line-height:30px;font-size:20px;color:#333333;letter-spacing:-0.187px">Hello, JNotepad!</div><div class="t c" style="left:42.00px;top:860.5px;height:30px;line-height:30px;font-size:19.500px;letter-spacing:-1.500px">运行:</div><svg style="left:112px;top:864px" width="24" height="24" viewBox="0 0 24 24" ><path d="M4.500 4.500V1.500H21.500V15.500H19" fill="none" stroke="#7f8b91" stroke-width="1.600"/><rect x="1.100" y="5.100" width="16.800" height="13.800" fill="#3d8fad" stroke="#7f8b91" stroke-width="2.200"/><rect x="0" y="4" width="19" height="3.600" fill="#7f8b91"/><circle cx="20" cy="19.200" r="3.300" fill="#1ddc1d"/></svg><div class="t " style="left:140.80px;top:860.5px;height:30px;line-height:30px;font-size:18.700px;letter-spacing:0.150px">MyJavaFXApp</div><svg style="left:275.5px;top:870.5px" width="12" height="12" viewBox="0 0 12 12" ><path d="M0.500 0.500L11 11M11 0.500L0.500 11" stroke="#6e7174" stroke-width="1.300"/></svg><div class="a" style="left:93px;top:891.300px;width:210px;height:4px;border-radius:2px;background:#747a80"></div><svg style="left:2058px;top:863px" width="24" height="24" viewBox="0 0 24 24" ><path d="M14.30 6.11L14.44 3.22L9.56 3.22L9.70 6.11L7.88 7.16L5.44 5.60L3.01 9.82L5.58 11.15L5.58 13.25L3.01 14.58L5.44 18.80L7.88 17.24L9.70 18.29L9.56 21.18L14.44 21.18L14.30 18.29L16.12 17.24L18.56 18.80L20.99 14.58L18.42 13.25L18.42 11.15L20.99 9.82L18.56 5.60L16.12 7.16ZM16.00 12.20A4.00 4.00 0 1 0 8.00 12.20A4.00 4.00 0 1 0 16.00 12.20Z" fill="#afb1b3" fill-rule="evenodd" stroke="#afb1b3" stroke-width="0.6" stroke-linejoin="round"/></svg><div class="a" style="left:2100px;top:873.5px;width:18px;height:3px;background:#afb1b3;"></div><div class="a" style="left:136px;top:895.5px;width:708.5px;height:32.5px;background:#3a3a3a;"></div><div class="code" style="left:137px;top:897.500px;color:#a1a1a1">E:\Downloads\CodesDownloads\jdk\jdk-17.0.2\bin\java.exe ...</div><svg style="left:43px;top:905px" width="24" height="24" viewBox="0 0 24 24" ><path d="M12.600 7.050A7.300 7.300 0 1 0 9.400 21.300" fill="none" stroke="#499c54" stroke-width="3.200"/><path d="M13.200 0.800L22.600 7L13.200 13.200Z" fill="#499c54"/><rect x="12.300" y="15" width="7.700" height="8" fill="#afb1b3"/></svg><svg style="left:43px;top:945px" width="24" height="24" viewBox="0 0 24 24" ><path d="M2.300 19.200L11.500 10.500" stroke="#afb1b3" stroke-width="4"/><path d="M20.600 4.300L17 7.900L14.200 7.300L13.700 4.600L17.300 1A6 6 0 0 0 10.800 9.400L12.400 11L14 12.600A6 6 0 0 0 20.600 4.300Z" fill="#afb1b3"/></svg><div class="a" style="left:39px;top:980.3px;width:30px;height:1.4px;background:#595b5d;"></div><div class="a" style="left:46.2px;top:997.3px;width:15.4px;height:15.4px;background:#c75450;"></div><svg style="left:44px;top:1033px" width="24" height="24" viewBox="0 0 24 24" ><g fill="#499c54"><path d="M4.700 1.500l3 3 1.100-1.100-3-3ZM14.300 1.500l-3 3-1.100-1.100 3-3Z"/><path d="M5.200 6.800a4.300 3.600 0 0 1 8.600 0Z"/><path d="M4 8H15V11.500H10V20.600Q5 20 4 15Z"/><rect x="0.800" y="8.600" width="17.400" height="2.200"/><rect x="0.800" y="12.800" width="8" height="2.200"/><rect x="0.800" y="17" width="8" height="2.200"/></g><rect x="6.300" y="10.800" width="3" height="2" fill="#3c3f41"/><rect x="6.300" y="15" width="3" height="2" fill="#3c3f41"/><path d="M12 21L19.500 13.500" stroke="#afb1b3" stroke-width="2.600"/><path d="M13.800 11.700H21.300V19.200Z" fill="#afb1b3"/></svg><svg style="left:43px;top:1073px" width="22" height="20" viewBox="0 0 22 20" ><path d="M0.300 4H5.500L7.500 0.700H14.500L16.500 4H21.700V18.700H0.300Z" fill="#afb1b3"/><circle cx="11" cy="10.900" r="4.200" fill="none" stroke="#3c3f41" stroke-width="2.200"/></svg><svg style="left:42px;top:1110px" width="24" height="24" viewBox="0 0 24 24" ><path d="M5.500 6.500V2.200H21.500V21.800H5.500V17.500" fill="none" stroke="#afb1b3" stroke-width="2.400"/><path d="M0.800 12H10" stroke="#db5860" stroke-width="2.600"/><path d="M9 6.300L15.500 12L9 17.700Z" fill="#db5860"/></svg><svg style="left:43px;top:1150px" width="24" height="24" viewBox="0 0 24 24" ><path d="M17.700 8.500A8 8 0 1 0 8.500 17.700" fill="none" stroke="#afb1b3" stroke-width="2"/><path d="M9.500 5V10.500L6.500 13" fill="none" stroke="#afb1b3" stroke-width="1.800"/><path d="M12 10L22 16.500L17.200 17.600L20 22.500L17 23.800L14.500 19L12 22Z" fill="#afb1b3"/></svg><div class="a" style="left:39px;top:1185.3px;width:30px;height:1.4px;background:#595b5d;"></div><svg style="left:45px;top:1201px" width="20" height="18" viewBox="0 0 20 18" ><rect x="0" y="0.500" width="8.500" height="7" fill="#afb1b3"/><rect x="10.200" y="0.500" width="8.300" height="7" fill="#afb1b3"/><rect x="0" y="9.500" width="18.500" height="7" fill="#afb1b3"/></svg><div class="a" style="left:39px;top:1235.3px;width:30px;height:1.4px;background:#595b5d;"></div><svg style="left:43px;top:1247px" width="24" height="24" viewBox="0 0 24 24" ><path d="M15.300 0.800L23.200 8.700L20.600 9.600L16.300 13.900L15.700 19.300L11.200 14.800L1 23L9.200 12.800L4.700 8.300L10.100 7.700L14.400 3.400Z" fill="#afb1b3"/></svg><svg style="left:90px;top:908px" width="16" height="20" viewBox="0 0 16 20" ><path d="M8 19.500V3.500M1.500 9L8 2.500L14.500 9" fill="none" stroke="#5e6062" stroke-width="2.200"/></svg><svg style="left:90px;top:947px" width="16" height="20" viewBox="0 0 16 20" ><path d="M8 0.500V16.500M1.500 11L8 17.500L14.500 11" fill="none" stroke="#5e6062" stroke-width="2.200"/></svg><div class="a" style="left:81px;top:979px;width:33px;height:33.700px;border-radius:5px;background:#5c6164"></div><div class="a" style="left:81px;top:1018px;width:33px;height:33.700px;border-radius:5px;background:#5c6164"></div><svg style="left:88px;top:985px" width="22" height="22" viewBox="0 0 22 22" ><rect x="1" y="2" width="18" height="2.800" fill="#afb1b3"/><path d="M1 10.900H15.500A3.600 3.600 0 0 1 15.500 18.100H13" fill="none" stroke="#afb1b3" stroke-width="2.800"/><path d="M14 13.500V22.700L8.500 18.100Z" fill="#afb1b3"/><rect x="1" y="16.700" width="4.500" height="2.800" fill="#afb1b3"/></svg><svg style="left:88px;top:1023px" width="22" height="22" viewBox="0 0 22 22" ><rect x="1" y="4" width="6" height="2.800" fill="#afb1b3"/><rect x="1" y="10.400" width="6" height="2.800" fill="#afb1b3"/><rect x="1" y="16.800" width="18" height="2.800" fill="#afb1b3"/><rect x="13.200" y="0.500" width="2.600" height="9" fill="#afb1b3"/><path d="M9 8H20L14.500 14.700Z" fill="#afb1b3"/></svg><svg style="left:86px;top:1064px" width="24" height="22" viewBox="0 0 24 22" ><rect x="5.500" y="0.800" width="12" height="4.200" fill="#afb1b3"/><path d="M1.500 6.500H21.500Q22.500 6.500 22.500 7.500V14.800H17.500V11.800H5.500V14.800H0.500V7.500Q0.500 6.500 1.500 6.500Z" fill="#afb1b3"/><rect x="6.300" y="13.500" width="10.400" height="6.400" fill="none" stroke="#afb1b3" stroke-width="1.600"/><circle cx="19.500" cy="9" r="1" fill="#3c3f41"/></svg><svg style="left:89px;top:1101px" width="18" height="22" viewBox="0 0 18 22" ><path d="M6.500 0.800H11.500V2.200H16.700V5H1.300V2.200H6.500Z" fill="#afb1b3"/><path d="M2.800 6.500H15.200V19Q15.200 21 13.200 21H4.800Q2.800 21 2.800 19Z" fill="#afb1b3"/></svg><svg style="left:2136px;top:98px" width="20" height="22" viewBox="0 0 20 22" ><path d="M8.500 2.500A6 6 0 0 1 14.800 8.500V13L17.300 16.300H0.700L3.200 13V8.500A6 6 0 0 1 8.500 2.500Z" fill="#afb1b3"/><path d="M6.300 17.600H11.700A2.700 2.400 0 0 1 6.300 17.600Z" fill="#afb1b3"/><circle cx="14.300" cy="4.200" r="4.600" fill="#3c3f41"/><circle cx="14.300" cy="4.200" r="3.300" fill="#3592c4"/></svg><div class="a c" style="left:2143.5px;top:141px;width:0;height:0;"><div style="position:absolute;white-space:pre;transform:translate(-50%,-50%) rotate(90deg);line-height:20px;font-size:16.500px;letter-spacing:-1px;font-weight:400">通知</div></div><svg style="left:2135.5px;top:184px" width="20" height="20" viewBox="0 0 20 20" ><ellipse cx="9.500" cy="4" rx="8" ry="3.300" fill="#afb1b3"/><path d="M1.500 6.300Q9.500 10.300 17.500 6.300V9.300Q9.500 13.300 1.500 9.300Z" fill="#afb1b3"/><path d="M1.500 10.800Q9.500 14.800 17.500 10.800V13.800Q9.500 17.800 1.500 13.800Z" fill="#afb1b3"/><path d="M1.500 15.300Q9.500 19.300 17.500 15.300V16.500Q9.500 21.500 1.500 16.500Z" fill="#afb1b3"/></svg><div class="a c" style="left:2143.5px;top:233.5px;width:0;height:0;"><div style="position:absolute;white-space:pre;transform:translate(-50%,-50%) rotate(90deg);line-height:20px;font-size:16.500px;letter-spacing:-1px;font-weight:400">数据库</div></div><div class="t" style="left:2135.500px;top:280px;font-weight:bold;font-style:italic;font-size:23px;color:#afb1b3;letter-spacing:-1px;height:30px;line-height:30px">m</div><div class="a " style="left:2144px;top:338.5px;width:0;height:0;"><div style="position:absolute;white-space:pre;transform:translate(-50%,-50%) rotate(90deg);line-height:20px;font-size:18.500px;letter-spacing:-0.200px">Maven</div></div><div class="a" style="left:153.3px;top:1306px;width:83.6px;height:32px;background:#2d2f30;"></div><svg style="left:50px;top:1315px" width="14" height="18" viewBox="0 0 14 18" ><circle cx="3.200" cy="3" r="2.600" fill="#afb1b3"/><circle cx="3.200" cy="14.500" r="2.600" fill="#afb1b3"/><circle cx="10.800" cy="5.500" r="2.600" fill="#afb1b3"/><path d="M3.200 3V14.500M10.800 5.500Q10.800 10 3.200 11" fill="none" stroke="#afb1b3" stroke-width="1.900"/></svg><div class="t c" style="left:73.75px;top:1309.6px;height:30px;line-height:30px;font-size:16.500px;color:#bbbbbb;letter-spacing:-0.483px">版本控制</div><svg style="left:168px;top:1315px" width="20" height="20" viewBox="0 0 20 20" ><path d="M1 1L13.500 8.500L1 16Z" fill="#afb1b3"/><circle cx="15" cy="15.600" r="4.200" fill="#2d2f30"/><circle cx="15" cy="15.600" r="3" fill="#1ddc1d"/></svg><div class="t c" style="left:192.00px;top:1309.6px;height:30px;line-height:30px;font-size:16.500px;color:#ffffff;letter-spacing:-1.250px">运行</div><svg style="left:255px;top:1316px" width="16" height="16" viewBox="0 0 16 16" ><rect x="0" y="1" width="2.800" height="2.800" fill="#afb1b3"/><rect x="4.500" y="1" width="10.500" height="2.800" fill="#afb1b3"/><rect x="0" y="6.200" width="2.800" height="2.800" fill="#afb1b3"/><rect x="4.500" y="6.200" width="10.500" height="2.800" fill="#afb1b3"/><rect x="0" y="11.400" width="2.800" height="2.800" fill="#afb1b3"/><rect x="4.500" y="11.400" width="10.500" height="2.800" fill="#afb1b3"/></svg><div class="t " style="left:279.00px;top:1310.3px;height:30px;line-height:30px;font-size:16.500px;letter-spacing:-0.667px">TODO</div><svg style="left:352px;top:1314px" width="18" height="18" viewBox="0 0 18 18" ><circle cx="8.800" cy="8.800" r="7.800" fill="#afb1b3"/><rect x="7.600" y="3.800" width="2.400" height="6.200" fill="#3c3f41"/><rect x="7.600" y="11.400" width="2.400" height="2.400" fill="#3c3f41"/></svg><div class="t c" style="left:376.00px;top:1309.6px;height:30px;line-height:30px;font-size:16.500px;color:#bbbbbb;letter-spacing:-0.250px">问题</div><svg style="left:436px;top:1315px" width="18" height="16" viewBox="0 0 18 16" ><rect x="0" y="0" width="17" height="15.500" fill="#afb1b3"/><path d="M3 3.500L7.500 7.500L3 11.500" fill="none" stroke="#3c3f41" stroke-width="1.800"/><path d="M8.500 11.800H14" stroke="#3c3f41" stroke-width="1.800"/></svg><div class="t c" style="left:461.00px;top:1309.6px;height:30px;line-height:30px;font-size:16.500px;color:#bbbbbb;letter-spacing:-1.000px">终端</div><svg style="left:521px;top:1315px" width="20" height="20" viewBox="0 0 20 20" ><path d="M9.500 3A7.300 7.300 0 1 0 16.800 10.300" fill="none" stroke="#5e6062" stroke-width="2"/><path d="M11.300 1.500A7.300 7.300 0 0 1 18.300 8.500H11.300Z" fill="none" stroke="#5e6062" stroke-width="1.500"/></svg><div class="t " style="left:545.70px;top:1310.3px;height:30px;line-height:30px;font-size:17.500px;color:#bbbbbb;letter-spacing:-0.213px">Statistic</div><svg style="left:633px;top:1314px" width="22" height="22" viewBox="0 0 22 22" ><path d="M16.300 7A7.300 7.300 0 1 0 8 16.300" fill="none" stroke="#afb1b3" stroke-width="2"/><path d="M8.800 4.500V9.500L6 12" fill="none" stroke="#afb1b3" stroke-width="1.700"/><path d="M11 9.500L20.500 15L11 20.500Z" fill="#afb1b3"/></svg><div class="t c" style="left:659.00px;top:1309.6px;height:30px;line-height:30px;font-size:16.500px;color:#bbbbbb;letter-spacing:0.000px">分析器</div><svg style="left:735px;top:1315px" width="20" height="18" viewBox="0 0 20 18" ><path d="M4.800 0.500H13.700L18.300 8.500L13.700 16.500H4.800L0.200 8.500Z" fill="#afb1b3"/><path d="M6.800 4.300L13.300 8.500L6.800 12.700Z" fill="#3c3f41"/></svg><div class="t c" style="left:761.00px;top:1309.6px;height:30px;line-height:30px;font-size:16.500px;color:#bbbbbb;letter-spacing:-0.500px">服务</div><svg style="left:0;top:0" width="1" height="1"><g transform="translate(826.5 1320.5) rotate(-45) scale(0.8)" fill="#afb1b3"><path d="M-9.200 -3.300H6.500L9.600 -0.300V3.300H-9.200Z"/><rect x="-2.200" y="2" width="4.500" height="18.300"/></g></svg><div class="t c" style="left:844.00px;top:1309.6px;height:30px;line-height:30px;font-size:16.500px;color:#bbbbbb;letter-spacing:0.000px">构建</div><svg style="left:18px;top:1345px" width="20" height="20" viewBox="0 0 20 20" ><rect x="5" y="1" width="13.500" height="13.500" fill="none" stroke="#afb1b3" stroke-width="1.500"/><path d="M1.200 5V18H14" fill="none" stroke="#afb1b3" stroke-width="1.500"/></svg><div class="t " style="left:59.00px;top:1337.3px;height:30px;line-height:30px;font-size:19px;letter-spacing:0.216px">// <span class="c" style="font-size:18px">构建在</span> 2<span class="c" style="font-size:18px">秒</span>942<span class="c" style="font-size:18px">毫秒内成功完成</span> (<span class="c" style="font-size:18px">片刻之前</span>)</div><div class="t " style="left:1850.00px;top:1337.3px;height:30px;line-height:30px;font-size:18px;letter-spacing:0.333px">18:1</div><div class="t " style="left:1904.00px;top:1337.3px;height:30px;line-height:30px;font-size:18px;letter-spacing:-1.167px">CRLF</div><div class="t " style="left:1966.50px;top:1337.3px;height:30px;line-height:30px;font-size:18px;letter-spacing:0.250px">UTF-8</div><div class="t " style="left:2037.50px;top:1337.3px;height:30px;line-height:30px;font-size:18px;letter-spacing:0.250px">4 <span class="c" style="font-size:18px">个空格</span></div><svg style="left:2123px;top:1345px" width="20" height="18" viewBox="0 0 20 18" ><rect x="6" y="8" width="12.500" height="9.500" fill="#afb1b3"/><path d="M9 8V4.800A3.200 3.200 0 0 0 2.600 4.800V7" fill="none" stroke="#afb1b3" stroke-width="1.900"/></svg></body></html>
